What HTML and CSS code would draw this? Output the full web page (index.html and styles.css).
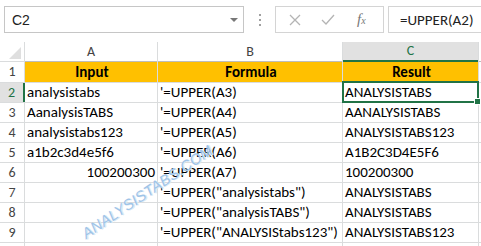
FILE: index.html
```html
<!DOCTYPE html>
<html lang="en">
<head>
    <meta charset="UTF-8">
    <title>UPPER function</title>
    <link rel="stylesheet" href="styles.css">
</head>
<body>
    <div class="sheet">
        <!-- Formula bar -->
        <div class="toolbar">
            <div class="name-box">
                <span>C2</span>
                <span class="drop"></span>
            </div>
            <div class="grip"><i></i><i></i><i></i></div>
            <div class="fx-buttons">
                <svg width="12" height="12" viewBox="0 0 12 12"><path d="M1 1 L11 11 M11 1 L1 11" stroke="#b4b4b4" stroke-width="1.3" fill="none"/></svg>
                <svg width="14" height="12" viewBox="0 0 14 12"><path d="M1 6 L5 10 L13 1" stroke="#b4b4b4" stroke-width="1.3" fill="none"/></svg>
                <span class="fx">f<sub>x</sub></span>
            </div>
            <div class="formula">=UPPER(A2)</div>
        </div>

        <!-- Grid -->
        <div class="grid-wrap">
            <div class="grid">
                <div class="corner"><span class="tri"></span></div>
                <div class="col-head">A</div>
                <div class="col-head">B</div>
                <div class="col-head active">C</div>
                <div class="col-head"></div>

                <div class="row-head">1</div>
                <div class="cell title">Input</div>
                <div class="cell title">Formula</div>
                <div class="cell title">Result</div>
                <div class="cell"></div>

                <div class="row-head active">2</div>
                <div class="cell">analysistabs</div>
                <div class="cell">'=UPPER(A3)</div>
                <div class="cell selected">ANALYSISTABS</div>
                <div class="cell"></div>

                <div class="row-head">3</div>
                <div class="cell">AanalysisTABS</div>
                <div class="cell">'=UPPER(A4)</div>
                <div class="cell">AANALYSISTABS</div>
                <div class="cell"></div>

                <div class="row-head">4</div>
                <div class="cell">analysistabs123</div>
                <div class="cell">'=UPPER(A5)</div>
                <div class="cell">ANALYSISTABS123</div>
                <div class="cell"></div>

                <div class="row-head">5</div>
                <div class="cell">a1b2c3d4e5f6</div>
                <div class="cell">'=UPPER(A6)</div>
                <div class="cell">A1B2C3D4E5F6</div>
                <div class="cell"></div>

                <div class="row-head">6</div>
                <div class="cell num">100200300</div>
                <div class="cell">'=UPPER(A7)</div>
                <div class="cell">100200300</div>
                <div class="cell"></div>

                <div class="row-head">7</div>
                <div class="cell"></div>
                <div class="cell">'=UPPER("analysistabs")</div>
                <div class="cell">ANALYSISTABS</div>
                <div class="cell"></div>

                <div class="row-head">8</div>
                <div class="cell"></div>
                <div class="cell">'=UPPER("analysisTABS")</div>
                <div class="cell">ANALYSISTABS</div>
                <div class="cell"></div>

                <div class="row-head">9</div>
                <div class="cell"></div>
                <div class="cell">'=UPPER("ANALYSIStabs123")</div>
                <div class="cell">ANALYSISTABS123</div>
                <div class="cell"></div>

                <div class="row-head"></div>
                <div class="cell"></div>
                <div class="cell"></div>
                <div class="cell"></div>
                <div class="cell"></div>
            </div>
            <div class="watermark">ANALYSISTABS.COM</div>
        </div>
    </div>
</body>
</html>
```

FILE: styles.css
```css
body {
    margin: 0;
    background-color: #fff;
    font-family: Carlito, Calibri, "Liberation Sans", sans-serif;
    font-size: 15px;
    color: #000;
    overflow: hidden;
}
.sheet {
    width: 481px;
    height: 246px;
    overflow: hidden;
}
.toolbar {
    display: flex;
    height: 27px;
    padding: 6px 0 9px 4px;
}
.name-box {
    width: 240px;
    border: 1px solid #c6c6c6;
    display: flex;
    align-items: center;
    justify-content: space-between;
    padding: 0 5px 0 7px;
    box-sizing: border-box;
    color: #222;
    font-family: "Liberation Sans", sans-serif;
    font-size: 14px;
}
.drop {
    width: 0;
    height: 0;
    border-left: 4px solid transparent;
    border-right: 4px solid transparent;
    border-top: 4px solid #777;
}
.grip {
    width: 31px;
    display: flex;
    flex-direction: column;
    align-items: center;
    justify-content: center;
    gap: 3px;
}
.grip i {
    width: 2px;
    height: 2px;
    background-color: #a0a0a0;
}
.fx-buttons {
    width: 109px;
    border: 1px solid #d4d4d4;
    display: flex;
    align-items: center;
    box-sizing: border-box;
    padding-left: 13px;
    gap: 20px;
}
.fx {
    font-family: "Liberation Serif", serif;
    font-style: italic;
    font-size: 15px;
    color: #777;
    margin-left: 2px;
}
.fx sub {
    font-size: 10px;
    vertical-align: 0;
}
.formula {
    flex: 1;
    margin-left: 4px;
    border: 1px solid #d4d4d4;
    border-right: none;
    display: flex;
    align-items: center;
    padding-left: 11px;
    font-size: 15px;
    color: #222;
}
.grid-wrap {
    position: relative;
}
.grid {
    display: grid;
    grid-template-columns: 24px 132px 184px 135px 1fr;
    grid-template-rows: 19px 20px repeat(9, 19px);
    gap: 1px;
    background-color: #dadcdd;
}
.corner {
    background-color: #fff;
    position: relative;
}
.tri {
    position: absolute;
    right: 3px;
    bottom: 2px;
    width: 0;
    height: 0;
    border-left: 12px solid transparent;
    border-bottom: 12px solid #dfdfdf;
}
.col-head {
    background-color: #fff;
    text-align: center;
    line-height: 19px;
    color: #444;
    font-size: 14px;
    border-bottom: 1px solid #bdbdbd;
    margin-bottom: -1px;
}
.col-head.active {
    background-color: #e1e1e1;
    color: #217346;
    border-bottom: 2px solid #217346;
    line-height: 18px;
}
.row-head {
    background-color: #fff;
    text-align: center;
    line-height: 19px;
    color: #444;
    font-size: 14px;
}
.row-head.active {
    background-color: #e1e1e1;
    color: #217346;
    border-right: 2px solid #217346;
    margin-right: -1px;
}
.cell {
    background-color: #fff;
    padding-left: 2px;
    line-height: 19px;
    white-space: nowrap;
}
.cell.title {
    background-color: #ffc000;
    font-weight: bold;
    text-align: center;
    line-height: 20px;
}
.cell.num {
    text-align: right;
    padding-right: 2px;
}
.cell.selected {
    position: relative;
}
.cell.selected::after {
    content: "";
    position: absolute;
    left: -1px;
    top: -2px;
    right: -1px;
    bottom: -1px;
    border: 2px solid #217346;
}
.cell.selected::before {
    content: "";
    position: absolute;
    right: -3px;
    bottom: -3px;
    width: 5px;
    height: 5px;
    background-color: #217346;
    border: 1px solid #fff;
    z-index: 1;
}
.watermark {
    position: absolute;
    left: 70px;
    top: 141px;
    font-family: "Liberation Sans", sans-serif;
    font-style: italic;
    font-size: 15px;
    letter-spacing: 0.3px;
    color: #9ec4e8;
    text-shadow: 1px 1px 0 #dbe8f5;
    transform: rotate(-34deg);
    pointer-events: none;
}
```
